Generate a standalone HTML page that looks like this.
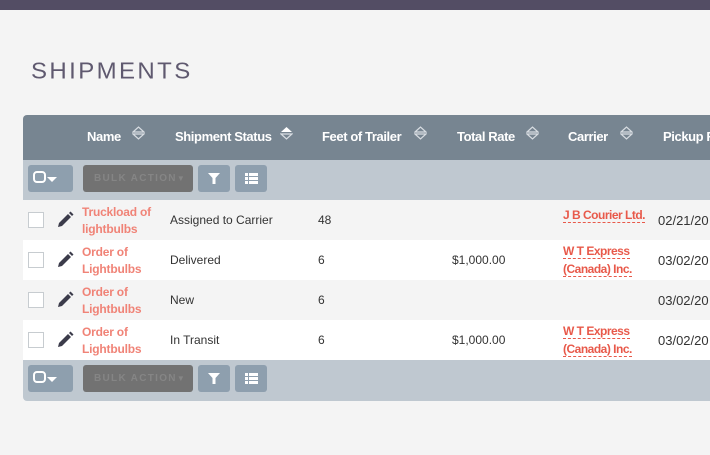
<!DOCTYPE html>
<html><head><style>
*{margin:0;padding:0;box-sizing:border-box}
body{width:710px;height:455px;background:#f4f4f4;font-family:"Liberation Sans",sans-serif;position:relative;overflow:hidden;color:#333}
.top{position:absolute;left:0;top:0;width:710px;height:10px;background:#534d64}
h1{position:absolute;left:31px;top:58px;font-weight:300;font-size:24px;letter-spacing:2.4px;color:#5f596f;font-family:"Liberation Sans",sans-serif;transform:scaleY(0.95)}
.hdr{position:absolute;left:23px;top:115px;width:700px;height:45px;background:#778591;border-top-left-radius:4px}
.hdr span{position:absolute;top:14px;color:#fff;font-weight:bold;font-size:13px;white-space:nowrap;letter-spacing:-0.4px}
.sort{position:absolute;top:11px}
.bar{position:absolute;left:23px;width:700px;height:40px;background:#bfc8d0}
.btn{position:absolute;top:5px;height:27px;background:#8e9fae;border-radius:3px}
.bulk{background:#727272;color:#858585;font-size:10px;font-weight:bold;letter-spacing:1.3px;line-height:27px;padding-left:11px}
.row{position:absolute;left:23px;width:700px;height:40px;font-size:12px}
.row .c{position:absolute;top:13px;white-space:nowrap}
.cb{position:absolute;left:5px;top:12px;width:16px;height:16px;border:1px solid #c7ccd0;background:#fff}
.pen{position:absolute;left:33px;top:11px}
.nm{position:absolute;left:59px;top:4px;color:#f08377;font-weight:bold;line-height:17px;font-size:12px;letter-spacing:-0.2px}
.car{position:absolute;left:540px;color:#e8594a;font-weight:bold;line-height:18px;font-size:12px;letter-spacing:-0.5px}
.car u{text-decoration:none;border-bottom:1px dashed #e8594a}
.d{font-size:13px;left:635px}
</style></head><body>
<div class="top"></div>
<h1>SHIPMENTS</h1>
<div class="hdr">
<span style="left:64px">Name</span>
<span style="left:152px">Shipment Status</span>
<span style="left:299px">Feet of Trailer</span>
<span style="left:434px">Total Rate</span>
<span style="left:545px">Carrier</span>
<span style="left:640px">Pickup R</span>
<svg class="sort" style="left:109px" width="13" height="14" viewBox="0 0 13 14"><path d="M1 6L6.5 1L12 6Z M1 8L6.5 13L12 8Z" fill="none" stroke="#d8dde2" stroke-width="1.2"/></svg>
<svg class="sort" style="left:257px" width="13" height="14" viewBox="0 0 13 14"><path d="M1 6L6.5 1L12 6Z" fill="#fff"/><path d="M1 8L6.5 13L12 8Z" fill="none" stroke="#d8dde2" stroke-width="1.2"/></svg>
<svg class="sort" style="left:391px" width="13" height="14" viewBox="0 0 13 14"><path d="M1 6L6.5 1L12 6Z M1 8L6.5 13L12 8Z" fill="none" stroke="#d8dde2" stroke-width="1.2"/></svg>
<svg class="sort" style="left:503px" width="13" height="14" viewBox="0 0 13 14"><path d="M1 6L6.5 1L12 6Z M1 8L6.5 13L12 8Z" fill="none" stroke="#d8dde2" stroke-width="1.2"/></svg>
<svg class="sort" style="left:597px" width="13" height="14" viewBox="0 0 13 14"><path d="M1 6L6.5 1L12 6Z M1 8L6.5 13L12 8Z" fill="none" stroke="#d8dde2" stroke-width="1.2"/></svg>
</div>

<div class="bar" style="top:160px">
<div class="btn" style="left:5px;width:45px"><svg width="45" height="27"><rect x="6" y="7" width="11" height="10" rx="3" fill="none" stroke="#fff" stroke-width="2"/><path d="M19 12h10l-5 5z" fill="#fff"/></svg></div>
<div class="btn bulk" style="left:60px;width:110px">BULK ACTION<span style="font-size:8px">▼</span></div>
<div class="btn" style="left:175px;width:32px"><svg width="32" height="27"><path d="M10 8h12l-4.5 5v6h-3v-6z" fill="#fff"/></svg></div>
<div class="btn" style="left:212px;width:32px"><svg width="32" height="27"><path d="M10 8h3v3h-3zM14 8h9v3h-9zM10 12h3v3h-3zM14 12h9v3h-9zM10 16h3v3h-3zM14 16h9v3h-9z" fill="#fff"/></svg></div>
</div>

<div class="row" style="top:200px;background:#f4f4f4">
<div class="cb"></div><svg class="pen" width="18" height="18" viewBox="0 0 18 18"><path d="M2 16l1-4 9-9 3 3-9 9z" fill="#3b3b4a"/><path d="M13 2l1.5-1.5 3 3L16 5z" fill="#3b3b4a"/></svg>
<div class="nm">Truckload of<br>lightbulbs</div>
<div class="c" style="left:147px">Assigned to Carrier</div>
<div class="c" style="left:295px">48</div>
<div class="car" style="top:6px"><u>J B Courier Ltd.</u></div>
<div class="c d">02/21/20</div>
</div>
<div class="row" style="top:240px;background:#fff">
<div class="cb"></div><svg class="pen" width="18" height="18" viewBox="0 0 18 18"><path d="M2 16l1-4 9-9 3 3-9 9z" fill="#3b3b4a"/><path d="M13 2l1.5-1.5 3 3L16 5z" fill="#3b3b4a"/></svg>
<div class="nm">Order of<br>Lightbulbs</div>
<div class="c" style="left:147px">Delivered</div>
<div class="c" style="left:295px">6</div>
<div class="c" style="left:429px">$1,000.00</div>
<div class="car" style="top:2px"><u>W T Express</u><br><u>(Canada) Inc.</u></div>
<div class="c d">03/02/20</div>
</div>
<div class="row" style="top:280px;background:#f4f4f4">
<div class="cb"></div><svg class="pen" width="18" height="18" viewBox="0 0 18 18"><path d="M2 16l1-4 9-9 3 3-9 9z" fill="#3b3b4a"/><path d="M13 2l1.5-1.5 3 3L16 5z" fill="#3b3b4a"/></svg>
<div class="nm">Order of<br>Lightbulbs</div>
<div class="c" style="left:147px">New</div>
<div class="c" style="left:295px">6</div>
<div class="c d">03/02/20</div>
</div>
<div class="row" style="top:320px;background:#fff">
<div class="cb"></div><svg class="pen" width="18" height="18" viewBox="0 0 18 18"><path d="M2 16l1-4 9-9 3 3-9 9z" fill="#3b3b4a"/><path d="M13 2l1.5-1.5 3 3L16 5z" fill="#3b3b4a"/></svg>
<div class="nm">Order of<br>Lightbulbs</div>
<div class="c" style="left:147px">In Transit</div>
<div class="c" style="left:295px">6</div>
<div class="c" style="left:429px">$1,000.00</div>
<div class="car" style="top:2px"><u>W T Express</u><br><u>(Canada) Inc.</u></div>
<div class="c d">03/02/20</div>
</div>

<div class="bar" style="top:360px;height:41px;border-bottom-left-radius:4px">
<div class="btn" style="left:5px;width:45px"><svg width="45" height="27"><rect x="6" y="7" width="11" height="10" rx="3" fill="none" stroke="#fff" stroke-width="2"/><path d="M19 12h10l-5 5z" fill="#fff"/></svg></div>
<div class="btn bulk" style="left:60px;width:110px">BULK ACTION<span style="font-size:8px">▼</span></div>
<div class="btn" style="left:175px;width:32px"><svg width="32" height="27"><path d="M10 8h12l-4.5 5v6h-3v-6z" fill="#fff"/></svg></div>
<div class="btn" style="left:212px;width:32px"><svg width="32" height="27"><path d="M10 8h3v3h-3zM14 8h9v3h-9zM10 12h3v3h-3zM14 12h9v3h-9zM10 16h3v3h-3zM14 16h9v3h-9z" fill="#fff"/></svg></div>
</div>
</body></html>
